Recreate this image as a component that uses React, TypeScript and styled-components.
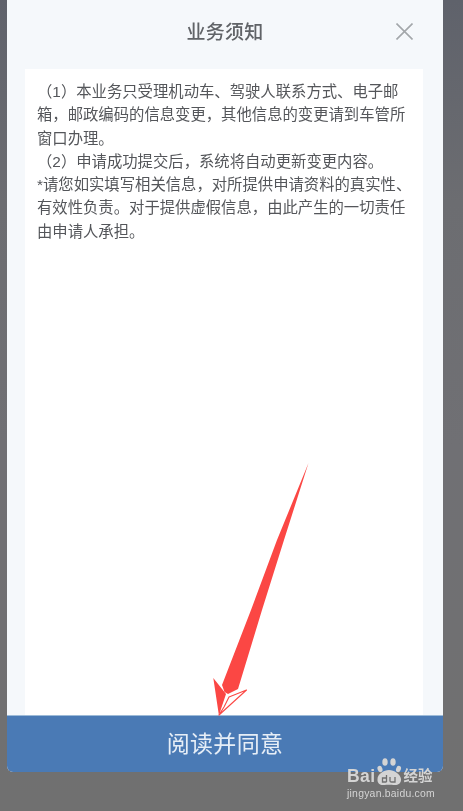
import React from 'react';
import styled, { createGlobalStyle } from 'styled-components';

const GlobalStyle = createGlobalStyle`
  html, body {
    margin: 0;
    padding: 0;
    width: 463px;
    height: 811px;
    overflow: hidden;
    background: #6f6f6f;
    font-family: "Liberation Sans", "Noto Sans CJK SC", sans-serif;
  }
`;

const Screen = styled.div`
  position: relative;
  width: 463px;
  height: 811px;
  padding-left: 7px;
  box-sizing: border-box;
  overflow: hidden;
  background: linear-gradient(180deg, #5f626b 0%, #6c6d71 25%, #707074 55%, #707070 100%);
  filter: blur(0.35px);
`;

const Dialog = styled.div`
  width: 436px;
  height: 772px;
  display: flex;
  flex-direction: column;
  background: #f5f8fb;
  border-radius: 0 0 6px 6px;
  overflow: hidden;
`;

const Header = styled.div`
  position: relative;
  flex: 0 0 69px;
  display: flex;
  align-items: center;
  justify-content: center;
  padding-bottom: 9px;
  box-sizing: border-box;
`;

const Title = styled.h1`
  margin: 0;
  font-size: 19px;
  font-weight: 500;
  color: #606367;
  letter-spacing: 0.3px;
`;

const CloseButton = styled.button`
  position: absolute;
  right: 30px;
  top: 23px;
  width: 17px;
  height: 17px;
  padding: 0;
  border: none;
  background: none;
  color: #a3a7aa;
  display: flex;
`;

const Body = styled.div`
  flex: 1;
  margin: 0 20px 0 18px;
  padding: 11px 9px 0 12px;
  background: #fff;
`;

const Paragraph = styled.p`
  margin: 0;
  font-size: 15.35px;
  line-height: 23.3px;
  color: #54565a;
`;

const AgreeButton = styled.button`
  flex: 0 0 57px;
  width: 100%;
  border: none;
  border-top: 1px solid #9dbbd8;
  padding: 0 0 5px;
  background: #4a7ab5;
  color: #e6eef7;
  font-family: inherit;
  font-size: 23px;
  letter-spacing: 0.3px;
`;

const ArrowMark = styled.svg`
  position: absolute;
  left: 205px;
  top: 455px;
  width: 115px;
  height: 270px;
`;

const Watermark = styled.div`
  position: absolute;
  left: 347px;
  top: 757px;
  width: 92px;
  color: #d4d4d4;
`;

const BrandRow = styled.div`
  display: flex;
  align-items: flex-end;
  height: 29px;
`;

const BrandLatin = styled.span`
  font-size: 17.5px;
  font-weight: 700;
  line-height: 20px;
  margin-bottom: 0;
  letter-spacing: 0.4px;
`;

const PawMark = styled.svg`
  width: 26px;
  height: 29px;
  margin: 0 1px 0 1px;
`;

const BrandCjk = styled.span`
  font-size: 14.5px;
  font-weight: 700;
  line-height: 20px;
`;

const Domain = styled.div`
  font-size: 10.4px;
  line-height: 13px;
  margin-top: 1px;
  letter-spacing: 0.25px;
  white-space: nowrap;
`;

export default function App() {
  return (
    <>
      <GlobalStyle />
      <Screen>
        <Dialog>
          <Header>
            <Title>业务须知</Title>
            <CloseButton aria-label="关闭">
              <svg width="17" height="17" viewBox="0 0 17 17" fill="none" stroke="currentColor" strokeWidth="1.6">
                <path d="M0.5 0.5 L16.5 16.5 M16.5 0.5 L0.5 16.5" />
              </svg>
            </CloseButton>
          </Header>
          <Body>
            <Paragraph>（1）本业务只受理机动车、驾驶人联系方式、电子邮箱，邮政编码的信息变更，其他信息的变更请到车管所窗口办理。</Paragraph>
            <Paragraph>（2）申请成功提交后，系统将自动更新变更内容。</Paragraph>
            <Paragraph>*请您如实填写相关信息，对所提供申请资料的真实性、有效性负责。对于提供虚假信息，由此产生的一切责任由申请人承担。</Paragraph>
          </Body>
          <AgreeButton>阅读并同意</AgreeButton>
        </Dialog>

        <ArrowMark viewBox="205 455 115 270">
          <path d="M308.5 463 L284 540 L262 610 L238 689 L228 694 L224.5 692 L222 685 L251 610 L277 540 Z" fill="#fb4744" />
          <path d="M213.3 678 L226 694 L221 709 L219 716 Z" fill="#fb4744" />
          <path d="M219 715 L246.5 690 L229 697 L224 707 Z" fill="#fff" stroke="#fb4744" strokeWidth="1.1" strokeLinejoin="round" />
        </ArrowMark>

        <Watermark>
          <BrandRow>
            <BrandLatin>Bai</BrandLatin>
            <PawMark viewBox="0 0 26 29" fill="currentColor">
              <ellipse cx="4" cy="12" rx="2.4" ry="3.2" transform="rotate(-20 4 12)" />
              <ellipse cx="9" cy="5" rx="2.7" ry="3.8" />
              <ellipse cx="17" cy="5" rx="2.7" ry="3.8" />
              <ellipse cx="22.5" cy="12" rx="2.4" ry="3.2" transform="rotate(20 22.5 12)" />
              <path d="M1.5 22 C1.5 17 8 13 13 13 C18 13 24.5 17 25 22 C25.5 27 21 28.5 18 28 C16 27.5 10 27.5 8 28 C5 28.5 1 27 1.5 22 Z" />
              <path d="M10.5 18 V25 M10.5 21 H6.5 V25 H10.5 M14 20 V24 Q14 25 15.5 25 H19 V20" fill="none" stroke="#6f6f6f" strokeWidth="1.3" />
            </PawMark>
            <BrandCjk>经验</BrandCjk>
          </BrandRow>
          <Domain>jingyan.baidu.com</Domain>
        </Watermark>
      </Screen>
    </>
  );
}
